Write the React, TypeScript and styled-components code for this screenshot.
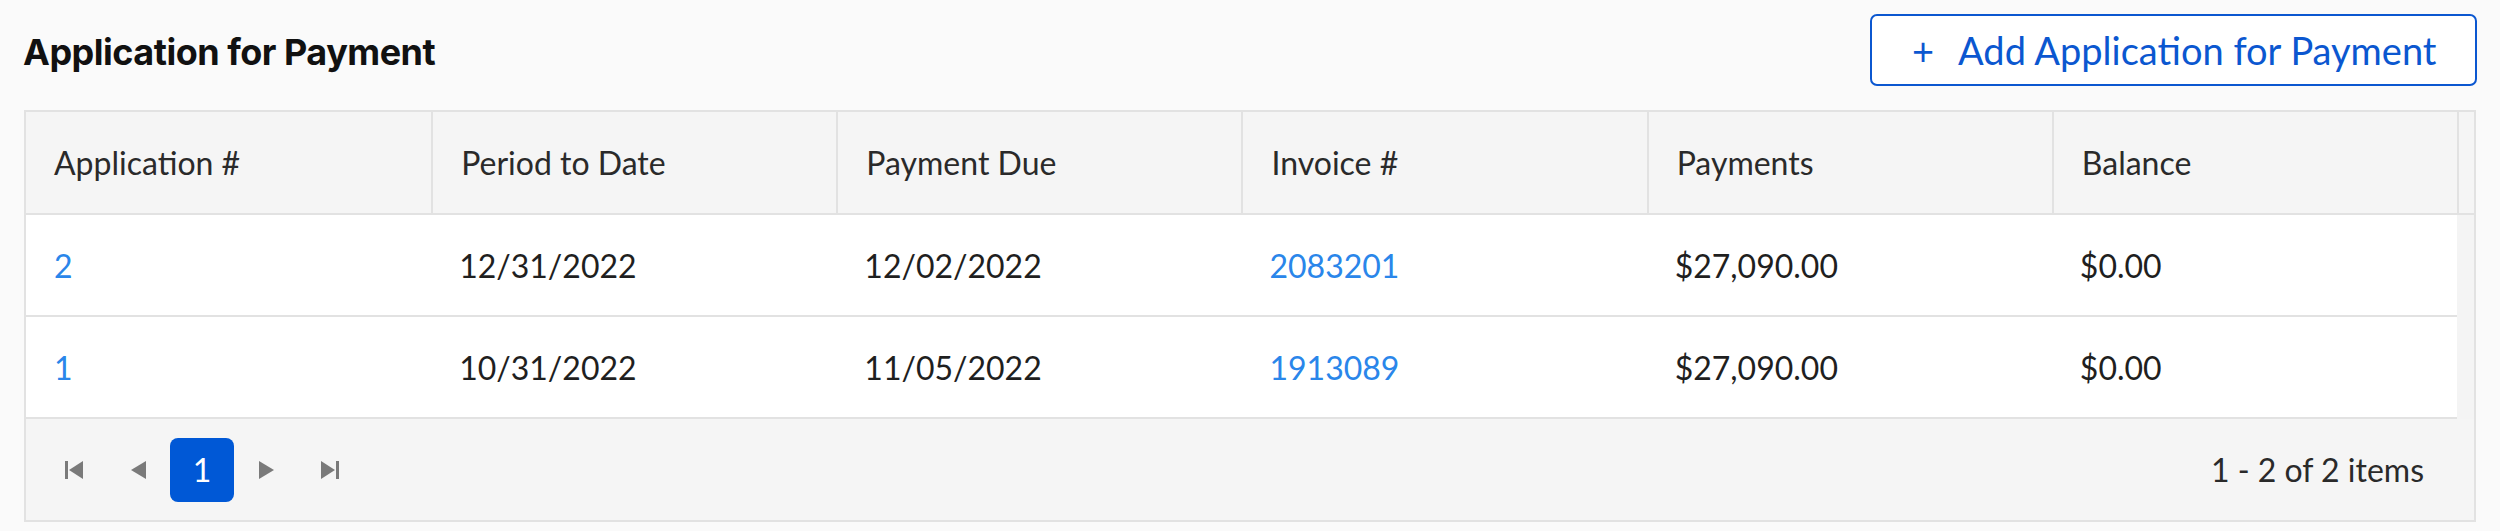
import React from 'react';
import styled, { createGlobalStyle } from 'styled-components';

const GlobalStyle = createGlobalStyle`
  html, body {
    margin: 0;
    padding: 0;
    background: #fafafa;
  }
  * {
    box-sizing: border-box;
  }
`;

const palette = {
  text: '#1f1f1f',
  border: '#e2e2e2',
  headerBg: '#f5f5f5',
  link: '#2a86ea',
  primary: '#0b57d0',
  active: '#0058d6',
  icon: '#7a7a7a',
};

type Row = {
  id: string;
  period: string;
  due: string;
  invoice: string;
  payments: string;
  balance: string;
};

const rows: Row[] = [
  {
    id: '2',
    period: '12/31/2022',
    due: '12/02/2022',
    invoice: '2083201',
    payments: '$27,090.00',
    balance: '$0.00',
  },
  {
    id: '1',
    period: '10/31/2022',
    due: '11/05/2022',
    invoice: '1913089',
    payments: '$27,090.00',
    balance: '$0.00',
  },
];

const columns = [
  'Application #',
  'Period to Date',
  'Payment Due',
  'Invoice #',
  'Payments',
  'Balance',
];

const FirstIcon = () => (
  <svg width="18" height="18" viewBox="0 0 18 18">
    <rect x="0" y="0" width="3" height="18" fill="currentColor" />
    <path d="M18 0 L4 9 L18 18 Z" fill="currentColor" />
  </svg>
);

const PrevIcon = () => (
  <svg width="15" height="18" viewBox="0 0 15 18">
    <path d="M15 0 L0 9 L15 18 Z" fill="currentColor" />
  </svg>
);

const NextIcon = () => (
  <svg width="15" height="18" viewBox="0 0 15 18">
    <path d="M0 0 L15 9 L0 18 Z" fill="currentColor" />
  </svg>
);

const LastIcon = () => (
  <svg width="18" height="18" viewBox="0 0 18 18">
    <path d="M0 0 L14 9 L0 18 Z" fill="currentColor" />
    <rect x="15" y="0" width="3" height="18" fill="currentColor" />
  </svg>
);

const App = () => {
  return (
    <>
      <GlobalStyle />
      <Page>
        <TopBar>
          <Title>Application for Payment</Title>
          <AddButton type="button">
            <Plus>+</Plus>
            <span>Add Application for Payment</span>
          </AddButton>
        </TopBar>
        <Grid>
          <HeaderRow>
            {columns.map((c) => (
              <HeaderCell key={c}>{c}</HeaderCell>
            ))}
            <Gutter />
          </HeaderRow>
          {rows.map((r) => (
            <BodyRow key={r.id}>
              <Cell>
                <Link>{r.id}</Link>
              </Cell>
              <Cell>{r.period}</Cell>
              <Cell>{r.due}</Cell>
              <Cell>
                <Link>{r.invoice}</Link>
              </Cell>
              <Cell>{r.payments}</Cell>
              <Cell>{r.balance}</Cell>
              <Track />
            </BodyRow>
          ))}
          <Pager>
            <PagerNav>
              <NavButton>
                <FirstIcon />
              </NavButton>
              <NavButton>
                <PrevIcon />
              </NavButton>
              <PageButton>1</PageButton>
              <NavButton>
                <NextIcon />
              </NavButton>
              <NavButton>
                <LastIcon />
              </NavButton>
            </PagerNav>
            <PagerInfo>1 - 2 of 2 items</PagerInfo>
          </Pager>
        </Grid>
      </Page>
    </>
  );
};

const Page = styled.div`
  width: 2500px;
  height: 531px;
  padding: 14px 24px 0 24px;
  font-family: Lato, 'Noto Sans', sans-serif;
  color: ${palette.text};
`;

const TopBar = styled.div`
  display: flex;
  align-items: center;
  justify-content: space-between;
  height: 72px;
  margin-bottom: 24px;
`;

const Title = styled.h1`
  margin: 4px 0 0 -1px;
  font-family: Inter, Lato, sans-serif;
  font-size: 36px;
  font-weight: 700;
  letter-spacing: -0.5px;
  color: #111;
`;

const AddButton = styled.button`
  display: flex;
  align-items: center;
  gap: 24px;
  height: 72px;
  width: 607px;
  padding: 0 0 0 40px;
  margin-right: -1px;
  border: 2px solid ${palette.primary};
  border-radius: 7px;
  background: #fff;
  color: ${palette.primary};
  font-family: Lato, 'Noto Sans', sans-serif;
  font-size: 38px;
  font-weight: 400;
`;

const Plus = styled.span`
  font-size: 38px;
  line-height: 1;
`;

const Grid = styled.div`
  border: 2px solid ${palette.border};
  width: 2452px;
`;

const HeaderRow = styled.div`
  display: grid;
  grid-template-columns: repeat(6, 1fr) 17px;
  height: 103px;
  background: ${palette.headerBg};
  border-bottom: 2px solid ${palette.border};
`;

const HeaderCell = styled.div`
  display: flex;
  align-items: center;
  padding-left: 28px;
  font-size: 32px;
  color: #2a2a2a;
  border-left: 2px solid ${palette.border};

  &:first-child {
    border-left: none;
  }
`;

const Gutter = styled.div`
  border-left: 2px solid ${palette.border};
`;

const BodyRow = styled.div`
  display: grid;
  grid-template-columns: repeat(6, 1fr) 17px;
  height: 102px;
  background: #fff;
`;

const Cell = styled.div`
  display: flex;
  align-items: center;
  padding-left: 28px;
  font-size: 32px;
  color: ${palette.text};
  border-bottom: 2px solid ${palette.border};
`;

const Track = styled.div`
  background: #f4f4f4;
`;

const Link = styled.span`
  color: ${palette.link};
`;

const Pager = styled.div`
  display: flex;
  align-items: center;
  justify-content: space-between;
  height: 101px;
  padding: 0 50px 0 16px;
  background: ${palette.headerBg};
`;

const PagerNav = styled.div`
  display: flex;
  align-items: center;
`;

const NavButton = styled.div`
  display: flex;
  align-items: center;
  justify-content: center;
  width: 64px;
  height: 64px;
  color: ${palette.icon};
`;

const PageButton = styled(NavButton)`
  border-radius: 8px;
  background: ${palette.active};
  color: #fff;
  font-size: 32px;
`;

const PagerInfo = styled.div`
  font-size: 32px;
  color: #2a2a2a;
`;

export default App;
